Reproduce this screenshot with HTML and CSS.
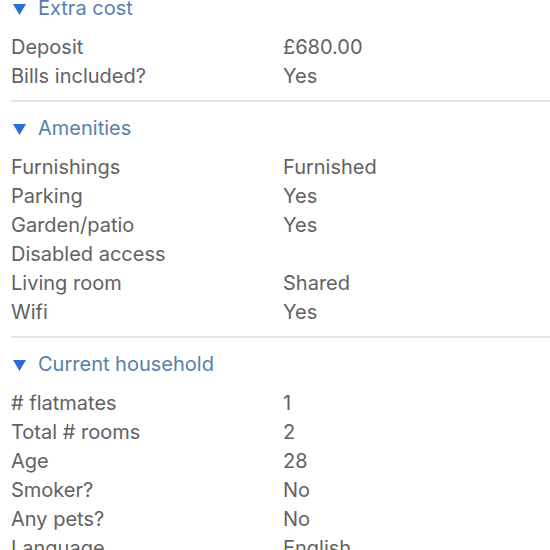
FILE: index.html
```html
<!DOCTYPE html>
<html lang="en">
<head>
  <meta charset="UTF-8" />
  <title>Room details</title>
  <link rel="stylesheet" href="styles.css">
</head>
<body>
  <div class="details">

    <section class="block">
      <h2 class="block-title"><svg class="arrow" width="13" height="11" viewBox="0 0 13 11"><polygon points="0,0 13,0 6.5,11" /></svg>Extra cost</h2>
      <dl class="facts">
        <dt>Deposit</dt><dd>£680.00</dd>
        <dt>Bills included?</dt><dd>Yes</dd>
      </dl>
    </section>

    <section class="block">
      <h2 class="block-title"><svg class="arrow" width="13" height="11" viewBox="0 0 13 11"><polygon points="0,0 13,0 6.5,11" /></svg>Amenities</h2>
      <dl class="facts">
        <dt>Furnishings</dt><dd>Furnished</dd>
        <dt>Parking</dt><dd>Yes</dd>
        <dt>Garden/patio</dt><dd>Yes</dd>
        <dt>Disabled access</dt><dd></dd>
        <dt>Living room</dt><dd>Shared</dd>
        <dt>Wifi</dt><dd>Yes</dd>
      </dl>
    </section>

    <section class="block">
      <h2 class="block-title"><svg class="arrow" width="13" height="11" viewBox="0 0 13 11"><polygon points="0,0 13,0 6.5,11" /></svg>Current household</h2>
      <dl class="facts">
        <dt># flatmates</dt><dd>1</dd>
        <dt>Total # rooms</dt><dd>2</dd>
        <dt>Age</dt><dd>28</dd>
        <dt>Smoker?</dt><dd>No</dd>
        <dt>Any pets?</dt><dd>No</dd>
        <dt>Language</dt><dd>English</dd>
      </dl>
    </section>

  </div>
</body>
</html>
```

FILE: styles.css
```css
body {
  font-family: Inter, 'Noto Sans', sans-serif;
  background-color: white;
  color: #626262;
  margin: 0;
  padding: 0;
  overflow: hidden;
}
.details {
  margin-top: -6px;
  padding-left: 11px;
}
.block {
  border-bottom: 2px solid #e2e2e2;
  padding-bottom: 9px;
  padding-top: 12px;
}
.block:first-child {
  padding-top: 0;
}
.block-title {
  margin: 0 0 10px 0;
  font-size: 20px;
  font-weight: 400;
  line-height: 29px;
  color: #5780ab;
  display: flex;
  align-items: center;
}
.arrow {
  fill: #2c6fd4;
  margin: 1px 12px 0 2px;
}
.facts {
  display: grid;
  grid-template-columns: 272px 1fr;
  margin: 0;
  font-size: 20px;
  line-height: 29px;
}
.facts dt, .facts dd {
  margin: 0;
}
```
